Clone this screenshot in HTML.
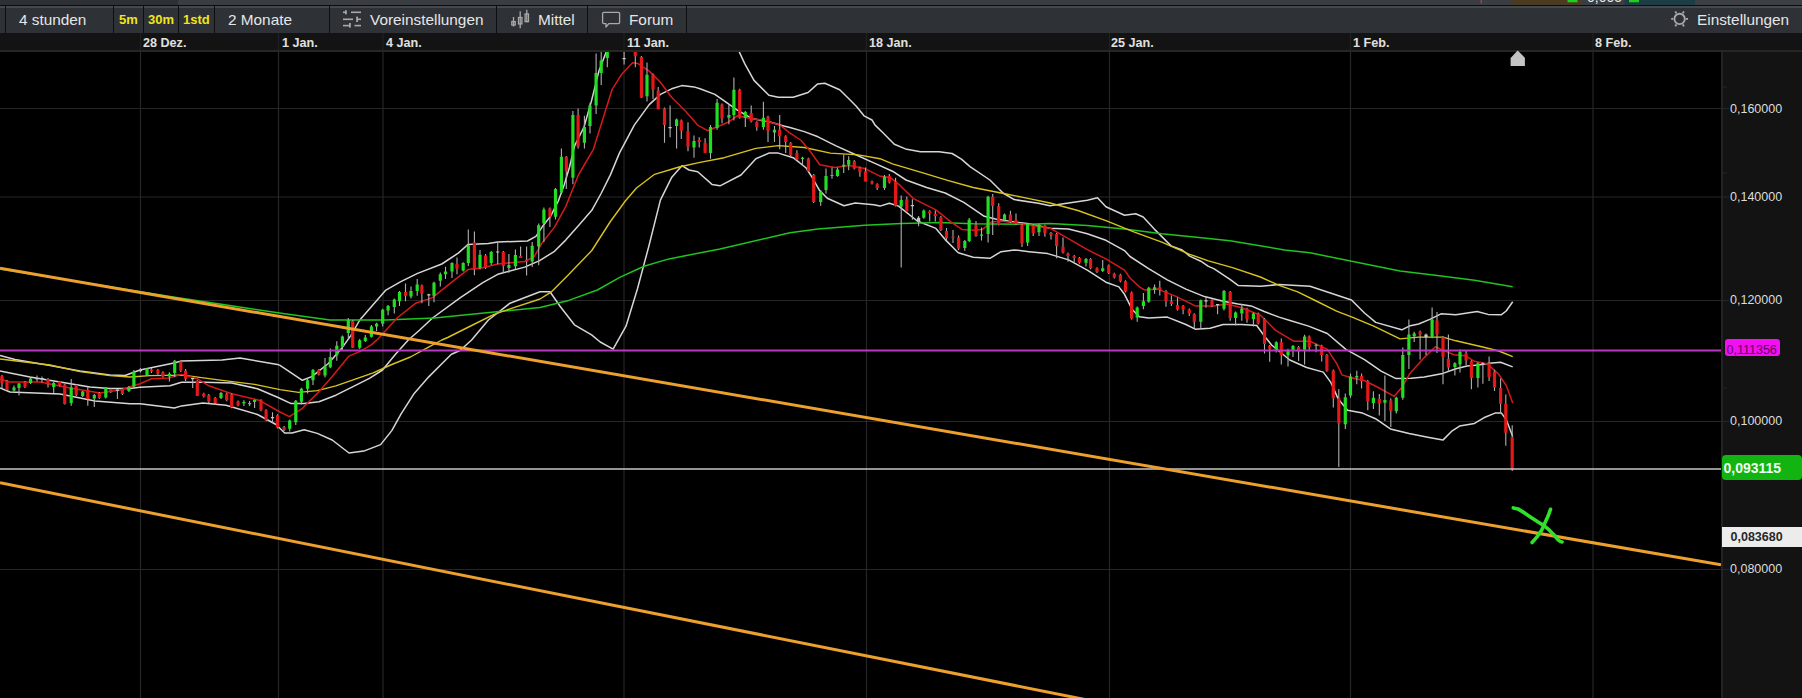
<!DOCTYPE html>
<html><head><meta charset="utf-8">
<style>
html,body{margin:0;padding:0;background:#000;width:1802px;height:698px;overflow:hidden;font-family:"Liberation Sans",sans-serif;}
.a{position:absolute;}
#top1{left:0;top:0;width:178px;height:5px;background:#2d3034;}
#top2{left:178px;top:0;width:1624px;height:5px;background:#3a3d41;}
#topline{left:0;top:5px;width:1802px;height:1px;background:#0c0d0e;}
#bar{left:0;top:6px;width:1802px;height:27px;background:#2e3135;}
#barhi{left:0;top:6px;width:1802px;height:2px;background:#45484c;}
.sep{top:6px;width:1px;height:27px;background:#0d0e10;}
.bt{top:6px;height:27px;line-height:27px;color:#e6e6e6;font-size:15.35px;white-space:nowrap;}
.yl{color:#f2e51a;font-weight:bold;font-size:13px;}
#dateax{left:0;top:33px;width:1802px;height:17px;background:#131313;}
#dateline{left:0;top:50px;width:1802px;height:2px;background:#262626;}
.dl{top:34px;height:17px;line-height:18px;color:#e0e0e0;font-size:12.6px;font-weight:bold;white-space:nowrap;}
#pax{left:1721px;top:52px;width:81px;height:646px;background:#131313;}
#paxb{left:1721px;top:52px;width:2px;height:646px;background:#232323;}
.pl{left:1730px;margin-top:1px;height:14px;line-height:14px;color:#dcdcdc;font-size:12.5px;white-space:nowrap;}
</style></head><body>
<div class="a" id="top1"></div><div class="a" id="top2"></div><div class="a" id="topline"></div>
<div class="a" id="bar"></div><div class="a" id="barhi"></div>
<div class="a sep" style="left:5px"></div>
<div class="a sep" style="left:113px"></div>
<div class="a sep" style="left:143px"></div>
<div class="a sep" style="left:178px"></div>
<div class="a sep" style="left:214px"></div>
<div class="a sep" style="left:329px"></div>
<div class="a sep" style="left:496px"></div>
<div class="a sep" style="left:587px"></div>
<div class="a sep" style="left:686px"></div>
<div class="a bt" style="left:19px">4 stunden</div>
<div class="a bt yl" style="left:119px">5m</div>
<div class="a bt yl" style="left:148px">30m</div>
<div class="a bt yl" style="left:183px">1std</div>
<div class="a bt" style="left:228px">2 Monate</div>
<div class="a bt" style="left:370px">Voreinstellungen</div>
<div class="a bt" style="left:538px">Mittel</div>
<div class="a bt" style="left:629px">Forum</div>
<div class="a bt" style="left:1697px">Einstellungen</div>
<div class="a" id="dateax"></div><div class="a" id="dateline"></div>
<div class="a dl" style="left:143px">28 Dez.</div>
<div class="a dl" style="left:282px">1 Jan.</div>
<div class="a dl" style="left:386px">4 Jan.</div>
<div class="a dl" style="left:627px">11 Jan.</div>
<div class="a dl" style="left:869px">18 Jan.</div>
<div class="a dl" style="left:1111px">25 Jan.</div>
<div class="a dl" style="left:1353px">1 Feb.</div>
<div class="a dl" style="left:1595px">8 Feb.</div>
<div class="a" id="pax"></div><div class="a" id="paxb"></div>
<div class="a pl" style="top:101px">0,160000</div>
<div class="a pl" style="top:189px">0,140000</div>
<div class="a pl" style="top:292px">0,120000</div>
<div class="a pl" style="top:413px">0,100000</div>
<div class="a pl" style="top:561px">0,080000</div>
<svg class="a" style="left:0;top:0" width="1802" height="698" viewBox="0 0 1802 698">
<defs><clipPath id="cc"><rect x="0" y="52" width="1721" height="646"/></clipPath></defs>
<line x1="140.5" y1="33" x2="140.5" y2="50" stroke="#202020" stroke-width="1.2"/>
<line x1="278.5" y1="33" x2="278.5" y2="50" stroke="#202020" stroke-width="1.2"/>
<line x1="383" y1="33" x2="383" y2="50" stroke="#202020" stroke-width="1.2"/>
<line x1="624" y1="33" x2="624" y2="50" stroke="#202020" stroke-width="1.2"/>
<line x1="866.5" y1="33" x2="866.5" y2="50" stroke="#202020" stroke-width="1.2"/>
<line x1="1109.5" y1="33" x2="1109.5" y2="50" stroke="#202020" stroke-width="1.2"/>
<line x1="1350.5" y1="33" x2="1350.5" y2="50" stroke="#202020" stroke-width="1.2"/>
<line x1="1593" y1="33" x2="1593" y2="50" stroke="#202020" stroke-width="1.2"/>
<g clip-path="url(#cc)">
<line x1="0" y1="108.5" x2="1721" y2="108.5" stroke="#262626" stroke-width="1.2"/>
<line x1="0" y1="197" x2="1721" y2="197" stroke="#262626" stroke-width="1.2"/>
<line x1="0" y1="300.5" x2="1721" y2="300.5" stroke="#262626" stroke-width="1.2"/>
<line x1="0" y1="421.5" x2="1721" y2="421.5" stroke="#262626" stroke-width="1.2"/>
<line x1="0" y1="569.5" x2="1721" y2="569.5" stroke="#262626" stroke-width="1.2"/>
<line x1="140.5" y1="52" x2="140.5" y2="698" stroke="#262626" stroke-width="1.2"/>
<line x1="278.5" y1="52" x2="278.5" y2="698" stroke="#262626" stroke-width="1.2"/>
<line x1="383" y1="52" x2="383" y2="698" stroke="#262626" stroke-width="1.2"/>
<line x1="624" y1="52" x2="624" y2="698" stroke="#262626" stroke-width="1.2"/>
<line x1="866.5" y1="52" x2="866.5" y2="698" stroke="#262626" stroke-width="1.2"/>
<line x1="1109.5" y1="52" x2="1109.5" y2="698" stroke="#262626" stroke-width="1.2"/>
<line x1="1350.5" y1="52" x2="1350.5" y2="698" stroke="#262626" stroke-width="1.2"/>
<line x1="1593" y1="52" x2="1593" y2="698" stroke="#262626" stroke-width="1.2"/>
<polyline points="0.0,388.0 10.0,392.0 60.0,394.0 95.0,401.0 130.0,403.7 140.0,403.8 174.4,408.0 181.5,405.9 203.0,403.0 226.0,405.2 257.5,414.5 276.0,424.5 284.7,433.0 291.9,433.0 304.2,429.7 317.3,433.4 332.2,440.0 349.0,453.0 363.8,451.1 380.6,444.6 391.8,430.6 401.1,413.8 414.2,393.4 429.0,376.6 442.1,363.5 451.4,354.2 460.0,350.5 471.6,340.0 488.4,320.0 510.0,303.2 540.0,291.8 550.0,291.8 560.0,306.2 574.4,324.8 591.6,334.8 600.2,342.0 613.1,349.2 626.0,326.2 637.4,289.0 648.9,246.0 660.4,200.1 671.8,177.2 681.9,165.7 689.0,170.0 697.7,171.7 712.0,184.4 720.0,185.8 741.0,175.0 755.9,158.7 768.9,153.1 778.3,153.1 793.2,157.7 806.2,168.0 812.4,177.8 819.8,190.8 827.3,198.3 844.0,205.7 855.2,202.9 873.8,204.8 880.0,206.1 889.3,203.3 898.6,206.1 917.3,221.0 935.9,228.4 945.2,239.6 958.3,252.7 973.2,257.3 989.9,258.3 1001.1,251.7 1014.2,249.9 1029.1,251.7 1047.7,253.6 1068.6,259.9 1087.3,270.1 1105.9,282.2 1118.9,286.9 1124.5,294.3 1132.0,309.2 1139.4,316.7 1148.6,318.0 1167.3,317.1 1185.9,324.5 1195.2,329.2 1210.1,328.3 1223.2,324.5 1241.8,324.5 1256.7,325.5 1264.2,335.7 1271.6,345.0 1289.8,360.0 1306.6,367.5 1323.3,372.1 1330.8,382.4 1338.3,399.1 1347.6,410.3 1362.5,413.1 1375.5,418.7 1390.4,428.9 1409.1,433.6 1427.7,437.3 1442.9,440.1 1452.2,430.8 1459.6,426.1 1474.5,423.4 1483.8,417.8 1495.0,413.1 1501.5,413.1 1506.2,419.6 1512.7,436.4" fill="none" stroke="#d6d6d6" stroke-width="1.5" stroke-linejoin="round"/>
<polyline points="0.0,371.0 30.0,377.0 60.0,382.0 90.0,387.0 110.0,388.6 130.0,388.6 140.0,387.3 170.0,385.8 181.5,382.3 204.5,382.3 231.7,383.0 257.5,388.7 277.5,397.3 291.2,403.6 304.2,403.6 319.0,401.7 335.9,395.2 354.5,385.9 369.4,378.4 382.5,370.0 395.5,354.2 408.3,340.0 419.7,330.0 432.5,318.0 460.4,297.6 482.8,282.7 497.7,274.3 524.7,267.1 539.6,260.6 554.5,251.3 565.7,240.1 578.8,225.2 591.8,210.3 601.1,193.5 610.4,174.9 619.4,153.1 634.3,125.1 649.2,104.6 660.4,94.4 671.6,88.8 681.9,85.6 694.0,86.9 700.0,88.8 714.9,94.4 724.2,100.9 737.3,110.2 752.2,118.6 770.8,122.3 783.8,126.0 790.0,127.5 804.3,131.6 818.0,136.8 836.6,146.1 855.2,154.5 873.8,162.9 892.5,171.2 906.0,180.0 926.6,187.5 945.2,193.0 963.8,202.4 984.3,216.3 995.5,219.1 1014.2,222.0 1029.1,223.8 1050.0,228.2 1068.6,229.1 1087.3,233.8 1105.9,240.3 1124.5,250.6 1130.0,256.5 1148.6,268.6 1167.3,279.8 1185.9,289.1 1204.5,296.6 1223.2,301.2 1238.1,304.0 1251.1,305.9 1264.2,311.5 1279.1,317.1 1290.0,320.5 1308.6,326.1 1327.3,333.5 1345.9,349.4 1364.5,359.6 1381.1,371.2 1396.0,378.6 1411.1,378.3 1424.2,377.1 1442.9,373.4 1455.9,368.8 1467.1,366.0 1478.3,365.0 1489.4,363.2 1500.6,362.2 1512.7,366.9" fill="none" stroke="#d6d6d6" stroke-width="1.5" stroke-linejoin="round"/>
<polyline points="0.0,355.5 15.0,359.5 50.0,365.5 80.0,371.0 110.0,375.0 125.0,375.5 140.0,370.0 174.0,363.0 181.5,361.0 222.0,360.0 240.0,358.0 277.5,364.4 280.0,365.4 291.2,372.9 302.4,380.3 311.7,376.6 328.4,363.5 341.5,348.6 350.8,335.6 359.8,320.0 385.9,290.1 400.8,281.7 417.6,273.4 441.8,264.0 458.6,252.9 467.9,244.5 488.4,243.5 497.7,242.0 527.5,241.0 535.9,236.4 543.4,225.2 550.8,215.9 558.3,201.0 563.8,186.1 569.4,167.5 574.7,145.6 584.0,127.0 591.5,100.9 598.9,71.1 606.4,51.5 610.0,40.0 735.0,40.0 739.1,51.5 744.7,63.6 754.0,80.4 768.9,95.3 778.3,97.2 793.2,97.2 808.1,92.5 817.4,84.1 824.8,83.2 839.7,89.7 849.1,99.0 856.5,106.5 864.0,115.8 872.0,120.0 875.1,125.1 883.2,133.0 894.3,144.2 905.5,148.9 920.4,151.7 939.1,151.7 952.1,153.5 961.4,159.1 970.0,166.6 989.9,180.0 1003.0,193.0 1014.2,199.6 1038.4,203.3 1050.0,205.8 1068.6,203.0 1087.3,200.2 1097.5,197.8 1105.9,206.8 1124.5,215.2 1135.7,213.8 1143.2,217.0 1154.3,229.1 1171.1,245.9 1182.2,250.0 1189.7,256.1 1200.8,261.2 1208.4,266.4 1213.8,268.6 1230.0,279.4 1238.1,285.4 1260.4,286.3 1279.1,284.5 1310.0,286.3 1351.5,300.0 1364.5,313.0 1375.7,322.4 1401.8,329.8 1409.2,326.1 1418.6,324.0 1429.8,319.4 1441.0,313.8 1455.9,314.7 1477.2,311.5 1488.0,314.4 1501.5,314.7 1506.2,311.0 1512.7,301.7" fill="none" stroke="#d6d6d6" stroke-width="1.5" stroke-linejoin="round"/>
<polyline points="0.0,269.0 170.0,296.5 226.4,305.0 283.0,313.5 330.0,320.0 385.9,320.0 434.3,318.0 479.0,313.4 510.0,310.6 540.0,307.6 568.7,300.4 597.4,290.0 619.7,277.4 644.0,266.2 669.0,258.9 720.0,248.9 790.0,232.7 818.0,229.0 864.5,225.3 901.8,223.4 939.1,222.5 973.2,223.8 1029.1,224.3 1050.0,223.5 1087.3,225.4 1124.5,229.1 1161.8,233.8 1199.1,237.5 1230.0,240.7 1284.6,250.0 1310.0,252.8 1400.0,271.0 1437.3,275.6 1474.5,280.2 1512.7,286.8" fill="none" stroke="#1fc41f" stroke-width="1.5" stroke-linejoin="round"/>
<polyline points="0.0,359.0 50.0,365.0 80.0,371.6 110.0,375.6 130.0,377.0 150.0,375.6 183.0,375.1 220.2,380.1 254.6,384.4 280.0,389.6 298.6,392.4 317.3,390.6 335.9,385.9 354.5,379.4 373.2,372.9 391.8,364.5 410.4,357.0 429.0,346.8 441.8,340.0 447.7,337.5 471.6,325.5 494.0,314.3 510.0,308.8 540.0,299.0 551.5,291.8 568.7,274.6 591.8,250.5 610.4,221.5 625.3,201.0 636.5,188.0 654.6,174.3 679.1,167.0 700.0,162.4 724.2,157.7 755.9,148.4 778.3,145.6 804.3,147.5 830.4,153.1 858.4,154.9 880.0,158.7 892.5,163.8 920.4,172.2 948.4,180.6 973.2,187.5 1001.1,193.0 1029.1,198.6 1050.0,203.0 1077.9,210.5 1105.9,220.7 1133.8,231.9 1161.8,242.2 1189.7,254.3 1208.4,260.8 1232.5,267.7 1260.4,277.0 1279.1,285.4 1297.7,291.9 1314.2,300.0 1336.6,311.2 1351.5,316.8 1373.8,326.1 1400.0,338.9 1418.6,337.1 1442.9,337.1 1455.9,340.8 1483.8,347.3 1498.8,351.0 1512.7,356.6" fill="none" stroke="#d8c21e" stroke-width="1.4" stroke-linejoin="round"/>
<polyline points="0.0,379.0 10.0,382.0 40.0,382.0 70.0,388.0 100.0,393.0 120.0,390.0 140.0,383.7 151.5,378.7 168.7,378.0 181.5,374.4 197.3,378.7 208.8,385.8 231.7,393.7 258.9,400.2 280.0,412.0 289.3,416.6 302.4,408.3 317.3,393.4 332.2,376.6 349.0,356.1 360.1,351.4 371.3,344.9 378.4,338.6 397.1,318.0 415.7,303.2 432.5,297.6 451.1,282.7 467.9,269.6 482.8,267.8 497.7,264.0 524.7,261.5 534.0,256.9 541.5,243.8 554.5,227.1 565.7,206.6 578.4,175.0 593.4,149.3 612.0,89.7 621.3,74.8 632.5,62.7 638.1,63.6 649.2,71.1 660.4,82.3 671.6,97.2 684.6,110.2 697.7,125.1 707.5,130.7 716.8,127.0 728.0,122.3 737.3,115.8 750.3,118.6 765.2,120.5 780.1,125.1 789.4,132.6 801.2,140.5 810.5,151.7 819.8,164.7 834.7,167.5 849.6,165.6 864.5,168.4 879.4,175.9 890.6,177.8 899.9,185.2 913.5,198.6 935.9,209.8 950.8,221.9 962.0,229.4 973.2,230.3 982.5,229.4 991.8,221.9 1001.1,221.0 1019.7,223.8 1038.4,226.6 1050.0,228.2 1064.9,236.6 1087.3,249.6 1105.9,258.9 1124.5,270.1 1130.0,278.0 1139.4,286.9 1144.9,290.1 1157.9,289.1 1176.6,296.6 1195.2,305.9 1213.8,305.9 1226.9,304.0 1241.8,307.8 1260.4,315.2 1275.3,330.1 1294.0,341.3 1310.0,341.3 1327.3,349.4 1336.6,363.4 1342.0,374.9 1351.3,377.7 1364.3,380.5 1379.2,388.0 1394.2,396.3 1401.8,387.6 1409.3,374.3 1424.2,357.6 1435.4,346.8 1442.9,350.1 1454.0,354.8 1465.2,355.7 1474.5,361.3 1487.6,364.1 1498.8,374.3 1506.2,385.5 1512.7,402.9" fill="none" stroke="#d41a1a" stroke-width="1.5" stroke-linejoin="round"/>
<path d="M2.0 375.0V388.6M7.0 380.0V391.0M14.0 385.6V391.6M19.0 383.0V395.6M25.0 381.0V388.0M30.6 378.0V384.0M37.0 375.6V381.6M42.0 376.6V382.6M48.0 378.0V387.6M53.7 382.0V393.0M59.7 381.0V386.6M64.7 384.0V404.6M71.2 379.0V405.7M76.2 384.0V396.0M82.7 391.0V397.0M87.8 387.0V405.7M94.3 394.0V407.0M99.3 392.0V399.0M105.8 387.0V398.6M110.8 388.0V393.0M117.4 389.6V399.0M122.4 388.0V395.0M128.9 386.0V392.0M133.9 370.0V387.0M140.4 368.0V372.6M147.0 368.0V376.0M151.5 368.0V373.0M157.9 369.0V374.7M162.9 371.2V377.5M169.4 372.2V381.5M174.7 360.0V377.2M180.8 360.5V372.0M185.6 369.0V381.0M192.7 378.0V388.0M197.3 380.0V396.0M203.8 392.7V397.6M208.8 394.0V403.0M215.2 397.0V405.0M221.0 392.0V399.0M226.7 392.7V401.2M231.7 393.4V408.3M238.1 400.6V406.2M243.9 400.2V405.9M249.6 401.0V406.0M254.6 399.5V408.0M261.0 399.2V411.2M266.1 409.2V421.2M272.5 412.3V423.0M277.5 414.2V428.4M284.1 426.0V431.0M289.7 419.4V431.5M295.8 399.9V425.0M301.4 387.8V404.5M307.6 378.4V393.4M313.0 369.1V385.0M318.8 369.0V375.5M325.0 358.0V377.5M330.3 348.6V368.2M336.8 341.2V360.7M342.4 335.6V350.5M348.3 318.0V338.6M352.7 320.0V348.0M359.7 339.0V349.0M365.3 335.0V342.0M371.4 325.0V337.5M376.6 322.7V331.0M382.7 308.8V326.5M388.1 305.0V315.3M394.3 298.5V313.4M399.5 291.0V306.0M405.5 283.6V301.3M411.0 286.4V298.5M417.2 279.0V295.7M421.9 284.5V303.2M428.8 293.8V306.0M434.0 281.7V302.2M440.3 272.4V286.4M445.5 266.8V279.0M452.0 262.2V278.0M457.0 257.5V274.3M463.2 262.2V271.5M468.3 229.6V266.0M474.4 231.4V275.2M480.0 250.0V269.6M485.6 254.0V269.0M491.2 251.0V265.0M497.7 242.0V264.3M503.3 251.0V272.7M508.9 254.0V272.7M515.4 249.4V269.0M520.6 246.6V258.0M526.6 246.6V275.5M532.2 242.0V267.1M538.7 223.4V265.3M543.9 207.5V242.0M549.9 207.5V227.1M555.5 188.0V219.6M561.4 148.6V193.0M566.3 156.0V188.9M572.9 111.1V184.2M578.1 108.4V148.4M584.4 115.8V148.4M590.0 102.8V133.5M596.1 53.4V114.0M601.2 51.0V85.0M607.3 51.0V67.3M624.1 51.0V64.6M635.3 51.0V67.3M641.4 56.0V98.0M647.0 62.5V101.5M653.0 73.5V99.0M658.2 87.0V109.3M664.5 107.4V142.8M670.1 105.6V137.2M676.6 118.6V148.4M681.3 119.5V139.1M688.0 122.3V151.2M694.0 135.4V157.7M699.2 137.2V147.5M705.1 138.2V153.1M710.5 125.1V158.7M717.1 99.0V129.8M722.0 103.6V123.3M728.9 104.6V124.2M733.9 77.6V120.5M739.7 88.7V118.7M745.3 111.1V127.0M751.2 105.6V122.4M756.8 121.3V130.7M763.4 101.8V129.8M768.0 115.7V141.9M774.5 126.0V141.9M779.7 114.9V149.3M785.7 135.3V153.1M790.7 141.9V156.8M796.9 150.3V160.5M802.5 156.7V166.1M808.4 157.7V172.0M813.7 174.0V203.0M820.7 189.9V205.7M826.0 168.4V193.6M832.0 167.5V178.7M837.5 167.5V176.8M843.7 154.5V173.1M848.7 156.3V170.3M854.3 160.0V169.4M859.9 166.5V176.8M865.5 167.5V181.5M872.0 180.5V184.4M877.2 183.3V189.9M884.5 175.0V189.9M889.3 174.0V183.4M895.6 177.8V206.6M901.2 195.5V267.6M906.8 196.4V211.3M912.4 199.2V219.7M918.6 216.0V226.2M923.8 209.4V218.8M929.7 210.3V221.5M935.3 210.4V221.5M940.9 215.9V230.9M946.5 228.0V240.2M953.0 229.9V243.0M958.6 235.5V250.1M964.8 240.0V250.8M969.2 218.0V242.0M976.0 221.0V236.8M981.5 227.5V240.6M988.1 195.8V242.4M992.7 194.0V235.0M998.7 203.3V225.6M1004.5 213.5V221.0M1010.4 210.7V222.9M1016.0 213.5V224.7M1022.0 223.7V247.1M1027.6 222.9V246.1M1033.2 224.6V235.9M1039.0 223.7V235.9M1044.9 224.7V236.8M1051.0 232.0V239.6M1056.6 233.1V258.3M1063.0 237.5V253.4M1068.0 252.4V261.7M1074.2 255.0V262.7M1079.4 257.0V263.7M1086.0 258.0V266.4M1090.6 258.0V269.3M1097.0 267.3V273.0M1102.7 259.9V272.0M1108.7 264.5V274.0M1114.3 272.8V278.6M1120.4 273.8V282.3M1125.5 280.3V292.5M1131.6 291.5V319.6M1137.2 306.4V321.7M1143.4 292.9V309.2M1148.8 286.8V302.8M1154.6 284.5V293.8M1159.8 280.7V295.6M1166.0 290.0V306.8M1171.4 295.6V305.9M1177.5 297.5V310.6M1183.1 304.9V314.3M1189.3 308.6V316.1M1194.3 313.3V328.3M1200.8 299.4V328.3M1206.0 296.6V307.8M1212.0 299.3V306.9M1217.6 304.0V314.3M1224.0 290.0V310.6M1230.2 290.9V320.8M1235.6 311.4V325.5M1241.8 304.0V320.8M1247.0 307.7V322.7M1253.4 312.4V326.4M1258.2 312.4V324.6M1264.5 318.0V353.4M1269.7 345.0V361.8M1276.3 341.3V352.5M1281.3 338.5V364.6M1288.0 348.8V366.5M1293.0 345.0V357.1M1298.6 346.0V360.9M1304.6 334.8V364.6M1309.2 335.6V351.3M1316.1 343.7V352.2M1321.7 344.7V361.5M1326.9 354.0V371.8M1333.3 369.5V407.5M1338.8 388.9V467.1M1345.3 393.5V429.0M1350.5 373.6V397.8M1356.8 370.8V384.2M1361.6 373.5V388.5M1367.8 380.0V410.3M1373.4 391.3V409.0M1379.3 394.1V415.5M1384.9 375.5V421.0M1390.8 398.2V427.1M1396.3 396.8V413.6M1402.8 347.5V399.7M1408.9 319.6V369.0M1414.2 331.7V341.9M1420.1 330.6V359.6M1426.0 333.5V355.0M1432.1 307.4V338.2M1437.0 312.0V353.0M1443.0 336.2V384.2M1448.4 334.5V370.8M1454.9 362.3V375.5M1460.0 349.5V372.5M1466.1 351.0V365.0M1471.4 360.3V389.2M1477.9 362.2V387.4M1482.9 362.2V383.7M1489.1 356.6V380.9M1494.5 369.7V391.1M1500.6 378.6V412.2M1505.8 394.5V445.7M1512.2 425.2V470.9" stroke="#b0b0b0" stroke-width="1.1" fill="none"/>
<path d="M12.4 387.6h3.2v3.0h-3.2zM17.4 383.6h3.2v4.4h-3.2zM29.0 378.6h3.2v4.4h-3.2zM52.1 383.0h3.2v4.0h-3.2zM69.6 387.6h3.2v15.4h-3.2zM81.1 391.6h3.2v4.4h-3.2zM92.7 395.0h3.2v3.6h-3.2zM104.2 387.6h3.2v10.0h-3.2zM127.3 387.0h3.2v4.0h-3.2zM132.3 371.6h3.2v15.0h-3.2zM145.4 368.6h3.2v6.4h-3.2zM167.8 373.7h3.2v2.8h-3.2zM173.1 360.8h3.2v12.2h-3.2zM219.4 393.0h3.2v5.0h-3.2zM242.3 402.0h3.2v1.2h-3.2zM248.0 403.0h3.2v1.2h-3.2zM253.0 400.0h3.2v2.0h-3.2zM288.1 420.4h3.2v8.4h-3.2zM294.2 400.8h3.2v21.4h-3.2zM299.8 388.7h3.2v13.0h-3.2zM306.0 380.3h3.2v8.4h-3.2zM311.4 370.0h3.2v10.3h-3.2zM323.4 366.3h3.2v9.3h-3.2zM328.7 357.0h3.2v10.3h-3.2zM335.2 345.8h3.2v9.4h-3.2zM340.8 336.5h3.2v10.3h-3.2zM346.7 320.0h3.2v13.0h-3.2zM358.1 340.2h3.2v7.5h-3.2zM363.7 337.5h3.2v3.5h-3.2zM369.8 326.5h3.2v10.2h-3.2zM375.0 323.7h3.2v2.8h-3.2zM381.1 309.7h3.2v14.0h-3.2zM386.5 306.0h3.2v4.6h-3.2zM392.7 299.4h3.2v7.5h-3.2zM397.9 292.0h3.2v9.3h-3.2zM409.4 291.0h3.2v5.6h-3.2zM415.6 284.5h3.2v6.5h-3.2zM432.4 282.7h3.2v13.0h-3.2zM438.7 274.3h3.2v6.5h-3.2zM443.9 271.5h3.2v2.8h-3.2zM450.4 263.0h3.2v8.5h-3.2zM461.6 263.0h3.2v7.6h-3.2zM466.7 245.4h3.2v17.6h-3.2zM478.4 254.7h3.2v13.1h-3.2zM489.6 252.0h3.2v11.1h-3.2zM507.3 265.0h3.2v3.0h-3.2zM513.8 255.0h3.2v11.2h-3.2zM530.6 245.7h3.2v15.8h-3.2zM537.1 225.2h3.2v21.4h-3.2zM542.3 209.4h3.2v14.0h-3.2zM553.9 188.9h3.2v27.9h-3.2zM559.8 156.8h3.2v35.8h-3.2zM571.3 114.9h3.2v62.8h-3.2zM582.8 127.0h3.2v15.8h-3.2zM588.4 105.6h3.2v20.4h-3.2zM594.5 73.0h3.2v32.6h-3.2zM599.6 60.4h3.2v12.6h-3.2zM605.7 51.5h3.2v6.5h-3.2zM645.4 74.8h3.2v21.4h-3.2zM675.0 119.5h3.2v6.5h-3.2zM692.4 141.0h3.2v6.5h-3.2zM708.9 127.0h3.2v26.1h-3.2zM715.5 102.8h3.2v25.1h-3.2zM727.3 114.9h3.2v2.8h-3.2zM732.3 89.7h3.2v25.2h-3.2zM743.7 112.1h3.2v5.6h-3.2zM761.8 117.7h3.2v9.3h-3.2zM772.9 129.8h3.2v2.8h-3.2zM800.9 157.7h3.2v1.2h-3.2zM819.1 191.7h3.2v10.3h-3.2zM824.4 175.9h3.2v14.0h-3.2zM830.4 174.9h3.2v1.2h-3.2zM835.9 169.4h3.2v6.5h-3.2zM842.1 164.7h3.2v1.9h-3.2zM847.1 160.1h3.2v4.6h-3.2zM882.9 176.8h3.2v11.2h-3.2zM899.6 200.0h3.2v6.6h-3.2zM922.2 210.4h3.2v7.4h-3.2zM963.2 241.1h3.2v6.9h-3.2zM967.6 219.7h3.2v21.4h-3.2zM979.9 234.5h3.2v1.2h-3.2zM986.5 196.8h3.2v37.2h-3.2zM1002.9 214.5h3.2v5.6h-3.2zM1026.0 223.8h3.2v18.6h-3.2zM1037.4 224.7h3.2v7.5h-3.2zM1084.4 258.9h3.2v3.8h-3.2zM1101.1 268.3h3.2v2.7h-3.2zM1135.6 307.4h3.2v10.2h-3.2zM1141.8 301.2h3.2v4.7h-3.2zM1147.2 287.8h3.2v14.0h-3.2zM1153.0 287.3h3.2v2.8h-3.2zM1199.2 300.3h3.2v21.4h-3.2zM1222.4 291.0h3.2v17.7h-3.2zM1234.0 312.4h3.2v5.6h-3.2zM1240.2 308.7h3.2v4.7h-3.2zM1251.8 313.4h3.2v5.5h-3.2zM1274.7 342.2h3.2v7.5h-3.2zM1286.4 350.6h3.2v4.7h-3.2zM1291.4 346.0h3.2v3.7h-3.2zM1303.0 336.6h3.2v13.1h-3.2zM1314.5 344.7h3.2v1.2h-3.2zM1343.7 397.3h3.2v27.0h-3.2zM1348.9 376.6h3.2v19.0h-3.2zM1355.2 376.0h3.2v1.5h-3.2zM1371.8 397.8h3.2v5.2h-3.2zM1383.3 400.0h3.2v2.8h-3.2zM1394.7 397.8h3.2v13.5h-3.2zM1401.2 355.0h3.2v42.8h-3.2zM1407.3 334.5h3.2v20.5h-3.2zM1412.6 333.5h3.2v2.8h-3.2zM1430.5 319.5h3.2v17.2h-3.2zM1453.3 363.3h3.2v3.8h-3.2zM1458.4 352.1h3.2v12.4h-3.2zM1476.3 363.2h3.2v14.9h-3.2z" fill="#22dd22"/>
<path d="M0.4 376.0h3.2v7.0h-3.2zM5.4 381.0h3.2v9.0h-3.2zM23.4 382.0h3.2v5.0h-3.2zM46.4 379.0h3.2v5.6h-3.2zM58.1 381.6h3.2v4.0h-3.2zM63.1 384.6h3.2v19.4h-3.2zM74.6 385.0h3.2v10.0h-3.2zM86.2 390.0h3.2v9.0h-3.2zM97.7 393.0h3.2v5.0h-3.2zM109.2 389.0h3.2v3.0h-3.2zM120.8 389.0h3.2v5.0h-3.2zM149.9 369.4h3.2v2.1h-3.2zM156.3 370.0h3.2v3.7h-3.2zM161.3 372.2h3.2v4.3h-3.2zM179.2 361.5h3.2v9.3h-3.2zM184.0 370.8h3.2v7.9h-3.2zM195.7 380.8h3.2v15.1h-3.2zM202.2 393.7h3.2v2.9h-3.2zM207.2 395.2h3.2v6.4h-3.2zM213.6 398.0h3.2v5.0h-3.2zM225.1 393.7h3.2v6.5h-3.2zM230.1 394.4h3.2v12.9h-3.2zM236.5 401.6h3.2v3.6h-3.2zM259.4 400.2h3.2v10.0h-3.2zM264.5 410.2h3.2v10.0h-3.2zM275.9 415.2h3.2v12.2h-3.2zM282.5 426.9h3.2v2.8h-3.2zM317.2 370.0h3.2v4.7h-3.2zM351.1 320.9h3.2v26.8h-3.2zM403.9 292.0h3.2v3.7h-3.2zM420.3 285.5h3.2v8.3h-3.2zM455.4 264.0h3.2v4.7h-3.2zM472.8 242.6h3.2v27.0h-3.2zM484.0 255.6h3.2v12.2h-3.2zM501.7 252.0h3.2v14.0h-3.2zM519.0 256.0h3.2v2.0h-3.2zM525.0 259.7h3.2v1.8h-3.2zM548.3 208.4h3.2v8.4h-3.2zM564.7 156.8h3.2v14.4h-3.2zM576.5 114.9h3.2v31.6h-3.2zM633.7 51.5h3.2v4.7h-3.2zM639.8 57.0h3.2v40.4h-3.2zM651.4 74.5h3.2v15.2h-3.2zM656.6 90.6h3.2v18.7h-3.2zM662.9 108.4h3.2v16.7h-3.2zM679.7 120.5h3.2v10.2h-3.2zM686.4 131.6h3.2v14.9h-3.2zM697.6 140.0h3.2v2.0h-3.2zM703.5 142.8h3.2v10.3h-3.2zM720.4 104.6h3.2v14.0h-3.2zM738.1 89.7h3.2v28.0h-3.2zM749.6 113.0h3.2v8.4h-3.2zM755.2 122.3h3.2v4.7h-3.2zM766.4 116.7h3.2v14.0h-3.2zM778.1 129.8h3.2v6.5h-3.2zM784.1 136.3h3.2v5.6h-3.2zM789.1 142.8h3.2v12.1h-3.2zM795.3 153.1h3.2v6.5h-3.2zM806.8 158.5h3.2v12.7h-3.2zM812.1 175.0h3.2v27.0h-3.2zM852.7 161.0h3.2v7.4h-3.2zM858.3 167.5h3.2v4.7h-3.2zM863.9 171.2h3.2v10.3h-3.2zM870.4 181.5h3.2v1.9h-3.2zM875.6 184.3h3.2v3.7h-3.2zM887.7 175.9h3.2v6.5h-3.2zM894.0 181.5h3.2v24.2h-3.2zM905.2 199.2h3.2v12.1h-3.2zM928.1 211.3h3.2v1.9h-3.2zM933.7 214.1h3.2v1.9h-3.2zM939.3 216.9h3.2v13.0h-3.2zM944.9 230.9h3.2v7.4h-3.2zM951.4 236.5h3.2v1.2h-3.2zM957.0 237.4h3.2v11.2h-3.2zM974.4 224.7h3.2v11.2h-3.2zM991.1 196.8h3.2v9.2h-3.2zM997.1 206.0h3.2v18.7h-3.2zM1008.8 214.5h3.2v7.4h-3.2zM1014.4 220.1h3.2v3.7h-3.2zM1020.4 224.7h3.2v18.6h-3.2zM1031.6 225.6h3.2v7.5h-3.2zM1043.3 225.6h3.2v7.5h-3.2zM1049.4 233.1h3.2v1.9h-3.2zM1055.0 234.0h3.2v12.1h-3.2zM1061.4 246.8h3.2v5.6h-3.2zM1066.4 253.4h3.2v2.7h-3.2zM1072.6 256.1h3.2v1.9h-3.2zM1077.8 258.0h3.2v4.7h-3.2zM1089.0 258.9h3.2v9.4h-3.2zM1095.4 268.3h3.2v3.7h-3.2zM1107.1 265.5h3.2v7.4h-3.2zM1112.7 273.8h3.2v3.8h-3.2zM1118.8 274.8h3.2v6.5h-3.2zM1123.9 281.3h3.2v10.2h-3.2zM1130.0 292.5h3.2v26.1h-3.2zM1158.2 287.3h3.2v2.8h-3.2zM1164.4 291.0h3.2v10.2h-3.2zM1169.8 301.2h3.2v2.8h-3.2zM1175.9 305.0h3.2v4.6h-3.2zM1181.5 305.9h3.2v3.7h-3.2zM1187.7 309.6h3.2v3.8h-3.2zM1192.7 314.3h3.2v7.4h-3.2zM1210.4 300.3h3.2v5.6h-3.2zM1228.6 291.9h3.2v26.1h-3.2zM1245.4 308.7h3.2v10.2h-3.2zM1256.6 313.4h3.2v10.2h-3.2zM1262.9 319.0h3.2v25.1h-3.2zM1268.1 346.0h3.2v2.8h-3.2zM1279.7 342.2h3.2v13.1h-3.2zM1297.0 346.9h3.2v4.6h-3.2zM1307.6 336.6h3.2v10.3h-3.2zM1320.1 345.7h3.2v9.3h-3.2zM1325.3 355.0h3.2v15.8h-3.2zM1331.7 370.5h3.2v27.7h-3.2zM1337.2 398.2h3.2v25.2h-3.2zM1360.0 376.0h3.2v5.2h-3.2zM1366.2 381.0h3.2v20.5h-3.2zM1377.7 398.8h3.2v4.6h-3.2zM1389.2 400.6h3.2v10.7h-3.2zM1418.5 331.7h3.2v2.8h-3.2zM1435.4 320.5h3.2v14.0h-3.2zM1441.4 337.2h3.2v19.5h-3.2zM1446.8 358.7h3.2v8.9h-3.2zM1464.5 353.5h3.2v7.1h-3.2zM1469.8 361.3h3.2v16.8h-3.2zM1487.5 363.2h3.2v13.9h-3.2zM1492.9 371.5h3.2v15.9h-3.2zM1499.0 388.0h3.2v15.8h-3.2zM1504.2 403.8h3.2v28.9h-3.2zM1510.6 437.3h3.2v31.7h-3.2z" fill="#e41818"/>
<path d="M35.4 378.0h3.2v1.2h-3.2zM40.4 378.0h3.2v1.2h-3.2zM115.8 389.6h3.2v1.2h-3.2zM138.8 370.0h3.2v1.2h-3.2zM191.1 378.0h3.2v1.2h-3.2zM270.9 417.0h3.2v1.2h-3.2zM427.2 294.3h3.2v1.2h-3.2zM496.1 251.4h3.2v1.2h-3.2zM622.5 58.0h3.2v1.2h-3.2zM668.5 127.0h3.2v1.2h-3.2zM910.8 205.0h3.2v1.2h-3.2zM917.0 217.8h3.2v3.7h-3.2zM1204.4 300.3h3.2v1.2h-3.2zM1216.0 304.0h3.2v1.2h-3.2zM1424.4 334.5h3.2v2.8h-3.2zM1481.3 363.2h3.2v1.2h-3.2z" fill="#c8c8c8"/>
<line x1="0" y1="350.5" x2="1721" y2="350.5" stroke="#b838c0" stroke-width="2"/>
<line x1="0" y1="469" x2="1721" y2="469" stroke="#c6c6c6" stroke-width="1.4"/>
<line x1="0" y1="268.3" x2="1721" y2="564.8" stroke="#eda12c" stroke-width="3"/>
<line x1="0" y1="482.8" x2="1100" y2="702.5" stroke="#eda12c" stroke-width="3"/>
</g>
<path d="M1510.6 58 L1517.7 50.6 L1524.9 57.8 V65.9 H1510.6 Z" fill="#c4c4c4"/>
<line x1="1721" y1="108.5" x2="1729" y2="108.5" stroke="#262626" stroke-width="1.2"/>
<line x1="1721" y1="197" x2="1729" y2="197" stroke="#262626" stroke-width="1.2"/>
<line x1="1721" y1="300.5" x2="1729" y2="300.5" stroke="#262626" stroke-width="1.2"/>
<line x1="1721" y1="421.5" x2="1729" y2="421.5" stroke="#262626" stroke-width="1.2"/>
<line x1="1721" y1="569.5" x2="1729" y2="569.5" stroke="#262626" stroke-width="1.2"/>
<line x1="1723" y1="87" x2="1727" y2="87" stroke="#262626" stroke-width="1"/>
<line x1="1723" y1="173" x2="1727" y2="173" stroke="#262626" stroke-width="1"/>
<line x1="1723" y1="388" x2="1727" y2="388" stroke="#262626" stroke-width="1"/>
<polyline points="1513.3,507.9 1517.9,508.9 1524.5,512.9 1531.1,517.5 1537.7,521.8 1543.6,525.4 1548.9,529.7 1554.1,535.0 1558.1,539.9 1560.5,541.6 1562.1,541.9" fill="none" stroke="#30e02a" stroke-width="3.6" stroke-linecap="round" stroke-linejoin="round"/>
<polyline points="1550.5,509.3 1548.2,515.8 1544.9,523.1 1541.6,530.3 1537.0,536.9 1532.1,542.5" fill="none" stroke="#30e02a" stroke-width="3.6" stroke-linecap="round" stroke-linejoin="round"/>
</svg>

<svg class="a" style="left:0;top:0" width="1802" height="52" viewBox="0 0 1802 52">
<g fill="#a9a9a9">
<!-- sliders icon -->
<rect x="343" y="11.5" width="3" height="1.6"/><rect x="345" y="10.3" width="1.8" height="4"/><rect x="351" y="11.5" width="10" height="1.6"/>
<rect x="343" y="18.5" width="10" height="1.6"/><rect x="356.2" y="16.6" width="1.8" height="5.4"/><rect x="358" y="18.5" width="3" height="1.6"/>
<rect x="343" y="24.8" width="6" height="1.6"/><rect x="349" y="23" width="1.8" height="4.6"/><rect x="354.5" y="24.8" width="6.5" height="1.6"/>
</g>
<g stroke="#a9a9a9" fill="none" stroke-width="1.3">
<!-- candles icon -->
<path d="M513.5 17V26.5M520.2 11.2V28.2M526.8 9.8V22.2"/>
<rect x="511.8" y="21.6" width="3.4" height="3.4"/><rect x="518.5" y="17.5" width="3.4" height="6.4"/><rect x="525.1" y="14" width="3.4" height="7.6"/>
<!-- bubble -->
<path d="M603.8 12.4H618.5Q619.6 12.4 619.6 13.5V22.6Q619.6 23.7 618.5 23.7H608.8L606 27V23.7H603.8Q602.6 23.7 602.6 22.6V13.5Q602.6 12.4 603.8 12.4Z" stroke-linejoin="round"/>
<!-- gear -->
<circle cx="1679.6" cy="18.9" r="5.2" stroke-width="1.9"/>
</g>
<g stroke="#a9a9a9" stroke-width="1.9" stroke-linecap="butt">
<path d="M1673.2 18.9H1671.2M1686 18.9H1688M1676.4 13.4L1675.3 11.4M1682.8 13.4L1683.9 11.4M1676.4 24.4L1675.3 26.4M1682.8 24.4L1683.9 26.4"/>
</g>
<!-- top strip widgets -->
<rect x="1480.6" y="0" width="1.2" height="3.5" fill="#b04060"/>
<rect x="1511" y="0" width="70" height="5" fill="#4a3b22"/>
<rect x="1567.5" y="0" width="10" height="2.3" fill="#1ed01e"/>
<rect x="1624.5" y="0" width="70.5" height="5" fill="#1c3d44"/>
<rect x="1629" y="0" width="10" height="2.3" fill="#1ed01e"/>
<rect x="1695" y="0" width="107" height="5" fill="#3c3f43"/>
</svg>
<div class="a" style="left:1587px;top:-10px;font-size:14px;color:#e8e8e8;white-space:nowrap;line-height:14px">0,005</div>
<div class="a" style="left:1725px;top:339px;width:55px;height:17px;border-radius:3px;background:#f20ff2;"></div>
<div class="a" style="left:1726.5px;top:341.5px;font-size:12.5px;line-height:16px;color:#600060;white-space:nowrap">0,111356</div>
<div class="a" style="left:1722px;top:454.5px;width:80px;height:25.5px;border-radius:4px;background:#12b412;"></div>
<div class="a" style="left:1723.5px;top:454.5px;font-size:14px;font-weight:bold;line-height:26px;color:#f0fff0;white-space:nowrap">0,093115</div>
<div class="a" style="left:1722px;top:526.5px;width:80px;height:20px;background:#ececec;"></div>
<div class="a" style="left:1730.5px;top:526.5px;font-size:12.5px;font-weight:bold;line-height:20px;color:#282828;white-space:nowrap">0,083680</div>
</body></html>
